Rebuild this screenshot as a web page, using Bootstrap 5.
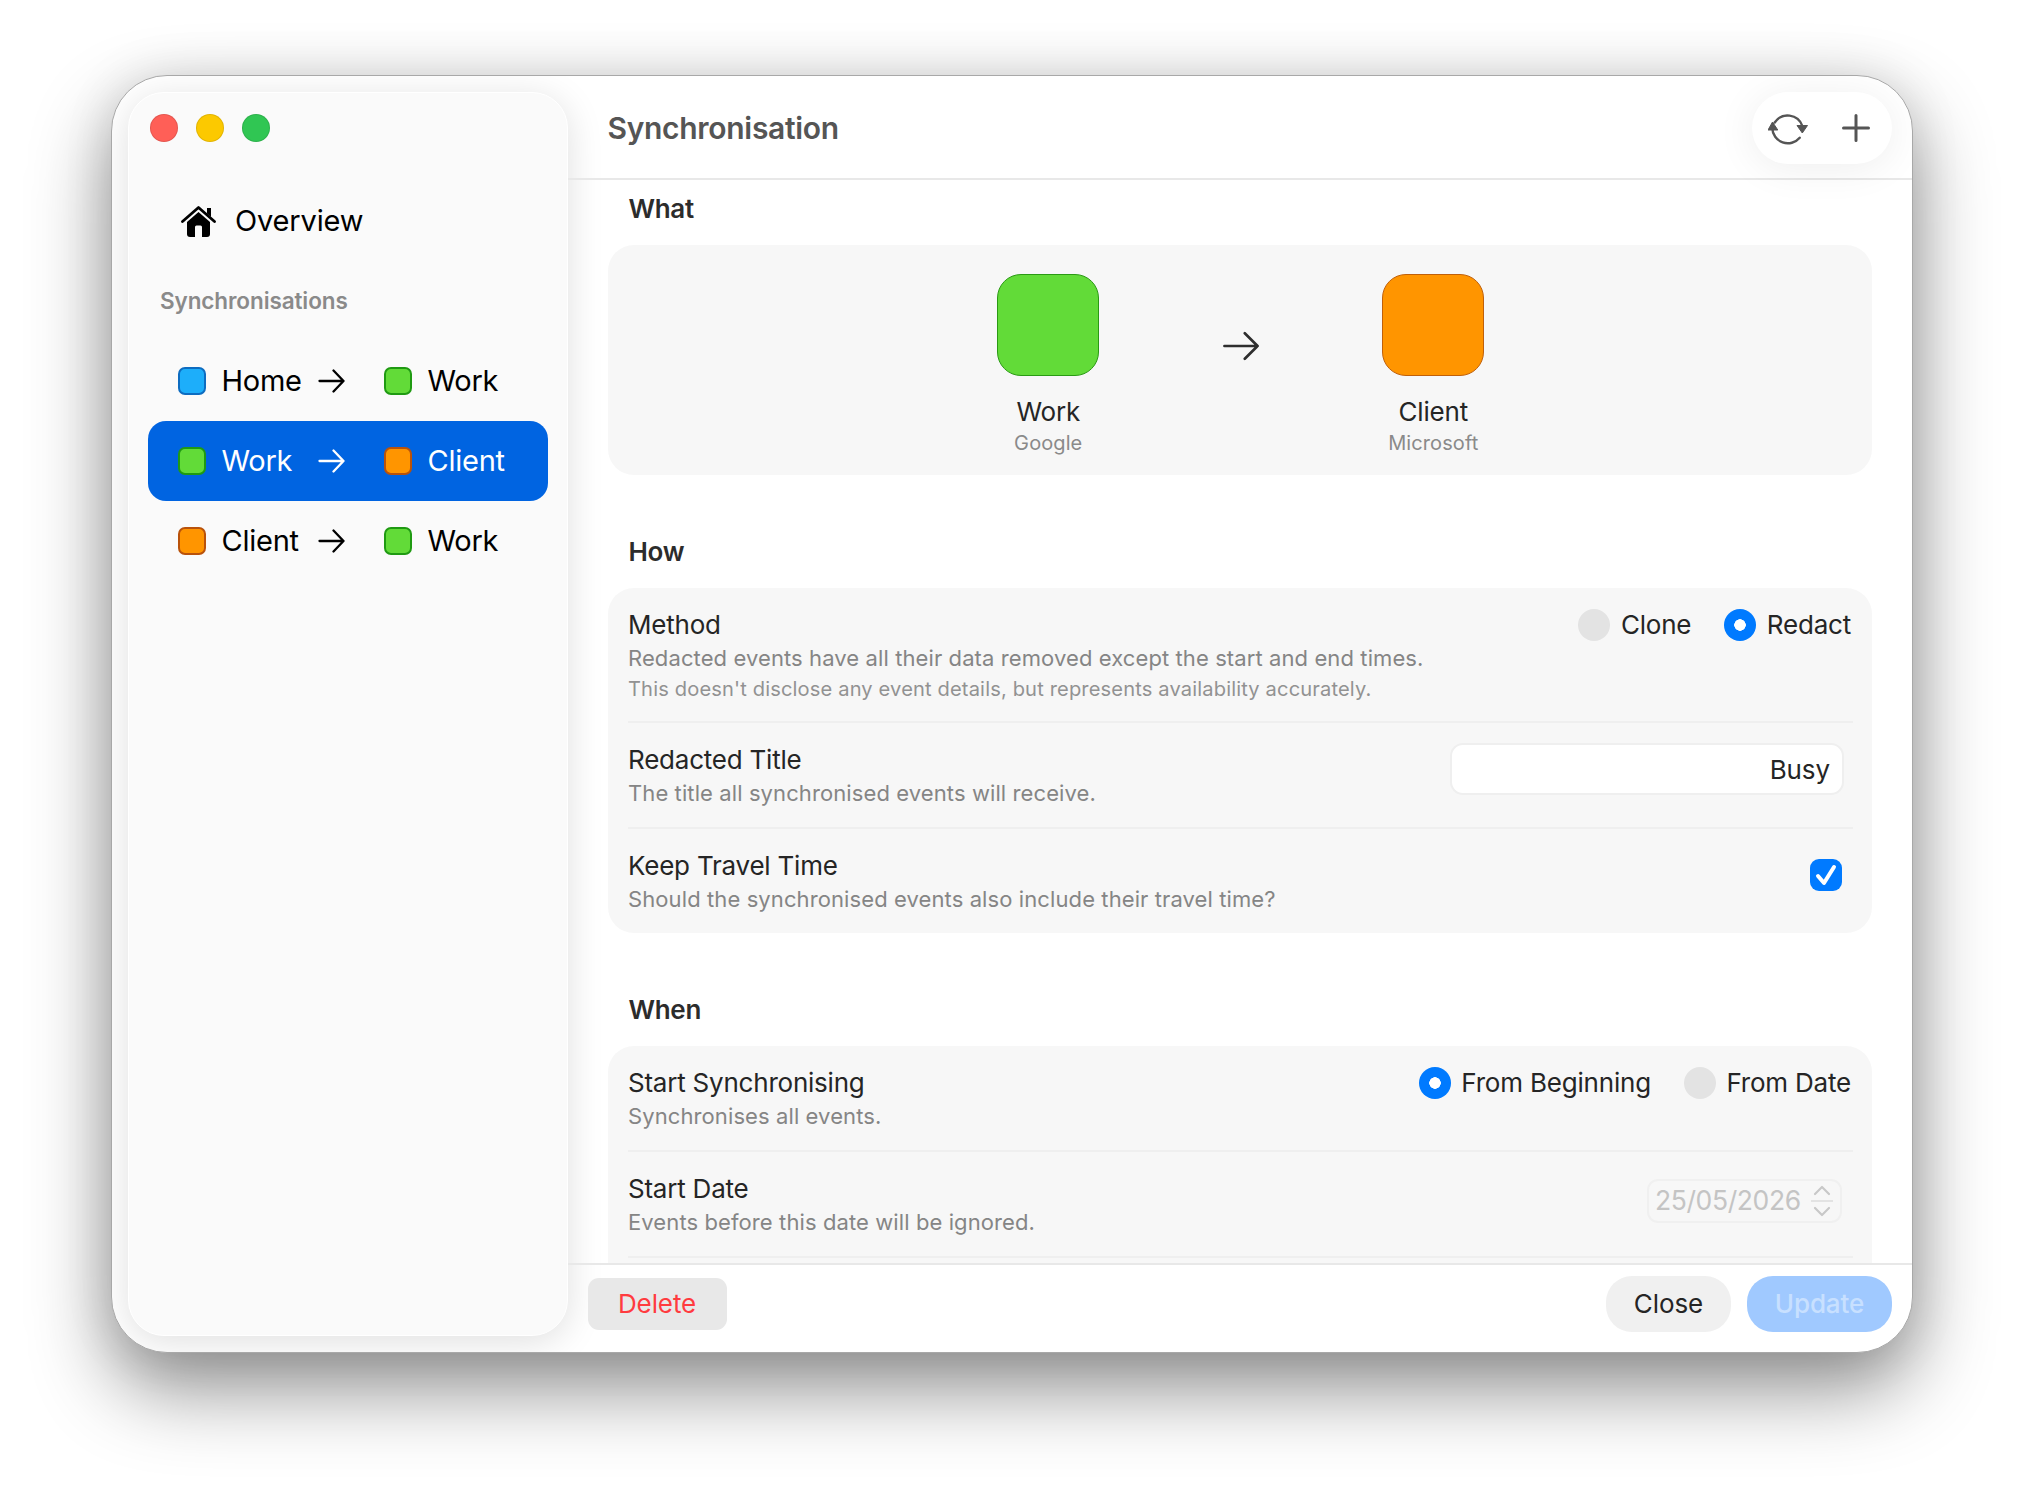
<!doctype html>
<html lang="en">
<head>
<meta charset="utf-8">
<title>Synchronisation</title>
<link href="https://cdn.jsdelivr.net/npm/bootstrap@5.3.0/dist/css/bootstrap.min.css" rel="stylesheet">
<style>
html,body{height:100%;}
body{margin:0;background:#fff;overflow:hidden;padding:75px 0 0 111px;font-family:Inter,"Liberation Sans",sans-serif;color:#252525;}
.win{width:1802px;height:1278px;background:#fff;border:1px solid #a8a8a8;border-radius:56px;box-shadow:0 36px 80px rgba(0,0,0,.44),0 0 50px rgba(0,0,0,.1);overflow:hidden;}
.side{width:439.5px;margin:16px 0 16px 16px;background:#fafafa;border:1.5px solid #fff;border-radius:36px;box-shadow:0 6px 36px rgba(0,0,0,.13);flex:none;padding:0 19px;}
.lights{height:71px;padding:21px 0 0 2px;gap:18px;}
.lamp{width:28px;height:28px;border-radius:50%;border:1px solid rgba(0,0,0,.1);}
.lamp-r{background:#ff5f57;}.lamp-y{background:#fcc900;}.lamp-g{background:#30c653;}
.ovw{height:66px;padding-left:33px;gap:19px;font-size:29px;letter-spacing:-.15px;color:#000;margin-top:24px;}
.sec-h{font-size:22.5px;font-weight:600;color:#8a8a8a;margin:30px 0 0 12px;line-height:34px;letter-spacing:-.1px;}
.syn-list{margin-top:22.5px;}
.syn{height:80px;border-radius:18px;padding-left:30px;font-size:29px;color:#000;letter-spacing:-.25px;}
.syn.on{background:#0064e1;color:#fff;}
.dot{width:28px;height:28px;border-radius:7px;border:2px solid;flex:none;}
.dot-b{background:#1daefa;border-color:#0d6cc0;}
.dot-g{background:#62db38;border-color:#1f9a12;}
.dot-o{background:#ff9500;border-color:#b9520a;}
.nm1{width:111.5px;padding-left:15.5px;flex:none;}
.arr{flex:none;margin-right:39px;}
.nm2{margin-left:16px;}
.mainc{min-width:0;}
.tbar{height:104px;border-bottom:2px solid #e8e8e8;padding:2px 20px 0 40px;flex:none;}
.ttl{font-size:30px;font-weight:600;color:#555;letter-spacing:-.3px;}
.pill{width:140px;height:72px;border-radius:36px;background:#fff;box-shadow:0 4px 40px rgba(0,0,0,.07);padding:0 22px 0 16px;}
.scrollr{overflow:hidden;min-height:0;padding:0 40px;}
.hd{font-size:26px;font-weight:600;line-height:34px;color:#2c2c2c;padding-left:21px;letter-spacing:-.3px;}
.hd-0{margin-top:12px;}
.hd-n{margin-top:60px;}
.pan{background:#f7f7f7;border-radius:26px;margin-top:19px;padding:0 19px 0 20.5px;}
.pan-w{height:230px;padding:29px 0 0 2px;}
.w-col{width:200px;text-align:center;}
.tile{width:102px;height:102px;border-radius:24px;border:1px solid;margin:0 auto 19px;}
.tile-g{background:#62db38;border-color:#2a9a14;}
.tile-o{background:#ff9500;border-color:#c0600a;}
.t1{font-size:26px;line-height:34px;letter-spacing:-.2px;}
.t2{font-size:20px;line-height:28px;color:#8a8a8a;letter-spacing:.1px;}
.w-arr{width:185px;padding-top:57px;text-align:center;}
.rw{border-bottom:2px solid #efefef;padding:20px 0 17px;}
.rw:last-child{border-bottom:0;}
.lb{font-size:26px;line-height:34px;letter-spacing:-.22px;color:#252525;}
.ds{font-size:22px;line-height:33px;color:#858585;letter-spacing:.1px;}
.ds2{font-size:20.1px;line-height:29px;color:#929292;letter-spacing:.15px;}
.opts{gap:33px;padding-right:2px;}
.opt{gap:10.5px;font-size:26px;line-height:34px;letter-spacing:-.2px;}
.opt .form-check-input{width:32px;height:32px;margin:0;border:0;background-color:#e3e3e3;flex:none;opacity:1;}
.opt .form-check-input:checked{background-color:#007aff;background-image:radial-gradient(circle,#fff 0,#fff 5.5px,transparent 6px);}
.txtb.form-control{width:394.5px;height:52px;border:2px solid #efefef;border-radius:13px;background:#fff;font-size:26px;line-height:50px;padding:0 12px 0 0;text-align:right;color:#252525;margin:0 9px 0 0;letter-spacing:-.1px;}
.chk.form-check-input{width:32px;height:32px;margin:10px 11px 0 0;border:0;border-radius:9px;background-color:#007aff;background-image:url("data:image/svg+xml,%3Csvg xmlns='http://www.w3.org/2000/svg' viewBox='0 0 32 32'%3E%3Cpath d='M8 17l6 7L24 8' fill='none' stroke='%23fff' stroke-width='4' stroke-linecap='round' stroke-linejoin='round'/%3E%3C/svg%3E");background-size:100% 100%;opacity:1;}
.dte{width:195px;height:44px;border:2px solid #f0f0f0;border-radius:11px;margin:7px 11px 0 0;padding:0 6px;font-size:26.5px;color:#c4c4c4;letter-spacing:-.4px;}
.foot{height:89px;border-top:2px solid #e8e8e8;padding:0 20px 10px;flex:none;}
.b-del.btn{width:139px;height:52px;background:#e8e8e8;border:0;border-radius:11px;color:#ff3b3f;font-size:26px;padding:0;letter-spacing:-.1px;}
.b-cls.btn{width:125px;height:56px;background:#f0f0f0;border:0;border-radius:26px;color:#252525;font-size:26px;padding:0;letter-spacing:-.1px;}
.b-upd.btn,.b-upd.btn:disabled{width:145px;height:56px;background:#a0c9ff;border:0;border-radius:26px;color:#c8e0ff;font-size:26px;padding:0;font-weight:500;opacity:1;margin-left:16px;letter-spacing:-.1px;}
</style>
</head>
<body>
<div class="win d-flex">
  <aside class="side">
    <div class="lights d-flex"><span class="lamp lamp-r"></span><span class="lamp lamp-y"></span><span class="lamp lamp-g"></span></div>
    <div class="ovw d-flex align-items-center">
      <svg width="35" height="32" viewBox="0 0 35 32" aria-hidden="true"><path d="M1.5 16.5 17.5 2.5l16 14" fill="none" stroke="#000" stroke-width="2.8" stroke-linecap="round" stroke-linejoin="round"/><path d="M26 3h4v9l-4-3.5z" fill="#000"/><path d="M17.5 7 6 17v12a3 3 0 0 0 3 3h17a3 3 0 0 0 3-3V17z" fill="#000"/><path d="M14 32V22a1.5 1.5 0 0 1 1.5-1.5h4A1.5 1.5 0 0 1 21 22v10z" fill="#fafafa"/></svg>
      <span>Overview</span>
    </div>
    <div class="sec-h">Synchronisations</div>
    <div class="syn-list">
      <div class="syn d-flex align-items-center"><span class="dot dot-b"></span><span class="nm1">Home</span><svg class="arr" width="27" height="24" viewBox="0 0 27 24"><path d="M1.5 12h24M15.5 1.5l10 10.5-10 10.5" fill="none" stroke="currentColor" stroke-width="2.3" stroke-linecap="round" stroke-linejoin="round"/></svg><span class="dot dot-g"></span><span class="nm2">Work</span></div>
      <div class="syn on d-flex align-items-center"><span class="dot dot-g"></span><span class="nm1">Work</span><svg class="arr" width="27" height="24" viewBox="0 0 27 24"><path d="M1.5 12h24M15.5 1.5l10 10.5-10 10.5" fill="none" stroke="currentColor" stroke-width="2.3" stroke-linecap="round" stroke-linejoin="round"/></svg><span class="dot dot-o"></span><span class="nm2">Client</span></div>
      <div class="syn d-flex align-items-center"><span class="dot dot-o"></span><span class="nm1">Client</span><svg class="arr" width="27" height="24" viewBox="0 0 27 24"><path d="M1.5 12h24M15.5 1.5l10 10.5-10 10.5" fill="none" stroke="currentColor" stroke-width="2.3" stroke-linecap="round" stroke-linejoin="round"/></svg><span class="dot dot-g"></span><span class="nm2">Work</span></div>
    </div>
  </aside>
  <main class="mainc flex-grow-1 d-flex flex-column">
    <header class="tbar d-flex align-items-center justify-content-between">
      <div class="ttl">Synchronisation</div>
      <div class="pill d-flex align-items-center justify-content-between">
        <svg width="40" height="34" viewBox="0 0 40 34" aria-hidden="true"><path d="M6.7 11.5A15.5 15.5 0 0 1 34.3 15M31.7 26.7A15.5 15.5 0 0 1 4.3 17" fill="none" stroke="#555" stroke-width="2.4" stroke-linecap="round"/><path d="M29 14.5h10.5L34.3 22zM0 19h9.8L4.5 11z" fill="#555" stroke="#555" stroke-linejoin="round"/></svg>
        <svg width="28" height="28" viewBox="0 0 28 28" aria-hidden="true"><path d="M14 1.5v25M1.5 14h25" fill="none" stroke="#555" stroke-width="3" stroke-linecap="round"/></svg>
      </div>
    </header>
    <div class="scrollr flex-grow-1">
      <div class="hd hd-0">What</div>
      <section class="pan pan-w d-flex justify-content-center">
        <div class="w-col"><div class="tile tile-g"></div><div class="t1">Work</div><div class="t2">Google</div></div>
        <div class="w-arr"><svg width="36" height="30" viewBox="0 0 38 30" aria-hidden="true"><path d="M1.5 15h35M23 1.5 36.5 15 23 28.5" fill="none" stroke="#2e2e2e" stroke-width="2.8" stroke-linecap="round" stroke-linejoin="round"/></svg></div>
        <div class="w-col"><div class="tile tile-o"></div><div class="t1">Client</div><div class="t2">Microsoft</div></div>
      </section>

      <div class="hd hd-n">How</div>
      <section class="pan">
        <div class="rw d-flex justify-content-between">
          <div><div class="lb">Method</div><div class="ds">Redacted events have all their data removed except the start and end times.</div><div class="ds2">This doesn't disclose any event details, but represents availability accurately.</div></div>
          <div class="opts d-flex align-items-start">
            <label class="opt d-flex align-items-center"><input class="form-check-input" type="radio" name="m">Clone</label>
            <label class="opt d-flex align-items-center"><input class="form-check-input" type="radio" name="m" checked>Redact</label>
          </div>
        </div>
        <div class="rw d-flex justify-content-between">
          <div><div class="lb">Redacted Title</div><div class="ds">The title all synchronised events will receive.</div></div>
          <div class="txtb form-control">Busy</div>
        </div>
        <div class="rw d-flex justify-content-between">
          <div><div class="lb">Keep Travel Time</div><div class="ds">Should the synchronised events also include their travel time?</div></div>
          <input class="chk form-check-input" type="checkbox" checked aria-label="Keep Travel Time">
        </div>
      </section>

      <div class="hd hd-n">When</div>
      <section class="pan">
        <div class="rw d-flex justify-content-between">
          <div><div class="lb">Start Synchronising</div><div class="ds">Synchronises all events.</div></div>
          <div class="opts d-flex align-items-start">
            <label class="opt d-flex align-items-center"><input class="form-check-input" type="radio" name="w" checked>From Beginning</label>
            <label class="opt d-flex align-items-center"><input class="form-check-input" type="radio" name="w">From Date</label>
          </div>
        </div>
        <div class="rw d-flex justify-content-between">
          <div><div class="lb">Start Date</div><div class="ds">Events before this date will be ignored.</div></div>
          <div class="dte d-flex align-items-center justify-content-between"><span>25/05/2026</span>
            <svg width="24" height="32" viewBox="0 0 24 32" aria-hidden="true"><path d="M5 9l7-7 7 7M5 23l7 7 7-7" fill="none" stroke="#c8c8c8" stroke-width="2.2" stroke-linecap="round" stroke-linejoin="round"/><path d="M1 16h22" stroke="#dcdcdc" stroke-width="1.5"/></svg>
          </div>
        </div>
        <div class="rw"></div>
      </section>
    </div>
    <footer class="foot d-flex align-items-center justify-content-between">
      <button class="btn b-del" type="button">Delete</button>
      <div class="d-flex align-items-center">
        <button class="btn b-cls" type="button">Close</button>
        <button class="btn b-upd" type="button" disabled>Update</button>
      </div>
    </footer>
  </main>
</div>
<script src="https://cdn.jsdelivr.net/npm/bootstrap@5.3.0/dist/js/bootstrap.bundle.min.js"></script>
</body>
</html>
